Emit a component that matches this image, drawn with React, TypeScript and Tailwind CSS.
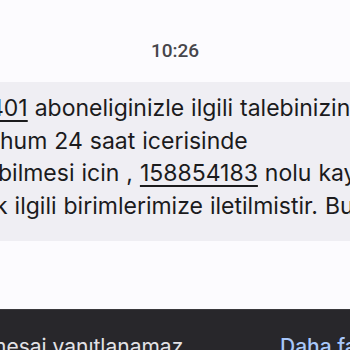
export default function App() {
  const lines = [
    { ml: "ml-[-11px]", content: <><span className="underline decoration-[1.5px] underline-offset-[4px]">401</span> aboneliginizle ilgili talebinizin</> },
    { ml: "ml-[0px]", content: <>hum 24 saat icerisinde</> },
    { ml: "ml-[-2px]", content: <>bilmesi icin , <span className="underline decoration-[1.5px] underline-offset-[4px]">158854183</span> nolu kayıt</> },
    { ml: "ml-[-5px]", content: <>k ilgili birimlerimize iletilmistir. Bu</> },
  ];

  return (
    <div className="w-[350px] h-[350px] overflow-hidden bg-[#fcfbfe] flex flex-col">
      <div className="h-[82px] shrink-0 pt-[41px] text-center font-['Roboto',sans-serif]">
        <p className="text-[19px] leading-none font-medium text-[#47464b]">10:26</p>
      </div>

      <div className="h-[159px] shrink-0 bg-[#efeef3] pt-[10px] text-[23px] leading-[32.5px] text-[#1b1b1d] overflow-hidden font-['Inter',sans-serif] [word-spacing:0.5px]">
        {lines.map((line, i) => (
          <div key={i} className={`whitespace-nowrap ${line.ml}`}>
            {line.content}
          </div>
        ))}
      </div>

      <div className="h-[68px] shrink-0" />

      <div className="flex-1 min-h-0 overflow-hidden bg-[#28272b] border-t border-[#3a393d] pt-[26px] flex justify-between whitespace-nowrap text-[21px] leading-none font-['Inter',sans-serif]">
        <span className="ml-[-12px] text-[#e3e2e6]">mesaj yanıtlanamaz</span>
        <span className="w-[70px] font-medium text-[#a8c7fa]">Daha fazla</span>
      </div>
    </div>
  );
}
